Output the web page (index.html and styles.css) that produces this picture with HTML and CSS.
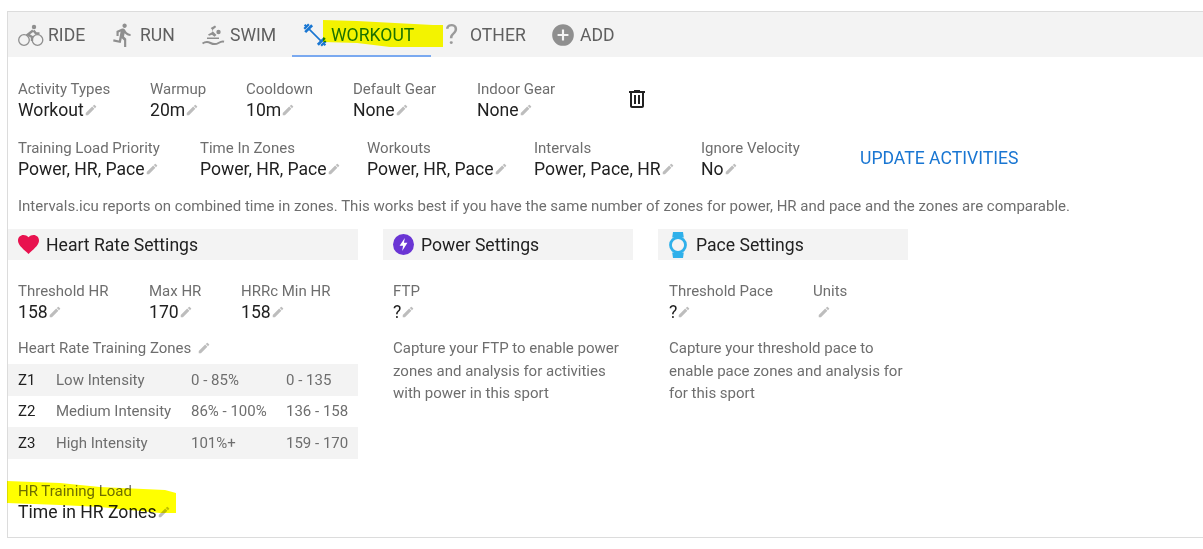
FILE: index.html
```html
<!DOCTYPE html>
<html lang="en">
<head>
<meta charset="utf-8">
<title>Sport settings</title>
<link rel="stylesheet" href="styles.css">
</head>
<body>
<svg class="defs" width="0" height="0" aria-hidden="true">
  <symbol id="pencil" viewBox="0 0 24 24"><path d="M3 17.25V21h3.75L17.81 9.94l-3.75-3.75L3 17.25zM20.71 7.04a1 1 0 0 0 0-1.41l-2.34-2.34a1 1 0 0 0-1.41 0l-1.83 1.83 3.75 3.75 1.83-1.83z"/></symbol>
</svg>
<main class="card">
  <nav class="tabs">
    <a class="tab"><svg class="ticon" viewBox="0 0 26 26"><circle cx="16" cy="5" r="2.200"/><g fill="none" stroke="#8f8f8f"><circle cx="6" cy="18" r="5.300" stroke-width="1.300"/><circle cx="19.500" cy="18" r="5.300" stroke-width="1.300"/><path d="M15 8.500L9.800 12.500 14 15v4M15.500 8.500l2.500 3h3.500" stroke-width="2.400"/></g></svg>RIDE</a>
    <a class="tab"><svg class="ticon" viewBox="0 0 24 24"><path d="M13.490 5.480c1.100 0 2-.9 2-2s-.9-2-2-2-2 .9-2 2 .9 2 2 2zm-3.600 13.900l1-4.400 2.100 2v6h2v-7.500l-2.100-2 .6-3c1.300 1.500 3.300 2.500 5.500 2.500v-2c-1.900 0-3.500-1-4.300-2.400l-1-1.600c-.4-.6-1-1-1.700-1-.3 0-.5.100-.8.100l-5.200 2.200v4.700h2v-3.400l1.800-.7-1.600 8.100-4.900-1-.4 2 7 1.400z"/></svg>RUN</a>
    <a class="tab tab-swim"><svg class="ticon" viewBox="0 0 26 26"><circle cx="16.500" cy="10" r="2.200"/><path d="M13 3.500l1.200 1.500-4.200 3.500 4.500 4.500-2 1.800-2.500-2-3 1-1-1.300 4-2.200 1-1.500-2.300-2.800z"/><path d="M5 15.500h12v1.500H5z"/><path fill="none" stroke="#8f8f8f" stroke-width="2" d="M0.500 21.500c3-2 5-2 8-.5s5.500 1.500 8 0 4-1.800 5.500-1.300"/></svg>SWIM</a>
    <a class="tab tab-active"><svg class="ticon" viewBox="0 0 24 24"><g transform="rotate(45 12 12)"><rect x="4" y="11.250" width="16" height="1.500"/><rect x="2.500" y="7.500" width="2.500" height="9"/><rect x="0" y="9" width="2" height="6"/><rect x="-1.500" y="11" width="2" height="2"/><rect x="19" y="7.500" width="2.500" height="9"/><rect x="22" y="9" width="2" height="6"/><rect x="23.500" y="11" width="2" height="2"/></g></svg>WORKOUT</a>
    <a class="tab tab-other"><span class="qmark">?</span>OTHER</a>
    <a class="tab tab-add"><svg class="ticon" viewBox="0 0 24 24"><path d="M12 2a10 10 0 1 0 0 20 10 10 0 0 0 0-20zm5 11h-4v4h-2v-4H7v-2h4V7h2v4h4v2z"/></svg>ADD</a>
  </nav>

  <div class="body">
    <div class="fields fields-top">
      <div class="field w-132"><span class="label">Activity Types</span><span class="value">Workout<svg class="pen"><use href="#pencil"/></svg></span></div>
      <div class="field w-96"><span class="label">Warmup</span><span class="value">20m<svg class="pen"><use href="#pencil"/></svg></span></div>
      <div class="field w-107"><span class="label">Cooldown</span><span class="value">10m<svg class="pen"><use href="#pencil"/></svg></span></div>
      <div class="field w-124"><span class="label">Default Gear</span><span class="value">None<svg class="pen"><use href="#pencil"/></svg></span></div>
      <div class="field w-148"><span class="label">Indoor Gear</span><span class="value">None<svg class="pen"><use href="#pencil"/></svg></span></div>
      <svg class="trash" viewBox="0 0 24 24"><path d="M15 4V3H9v1H4v2h1v13c0 1.100.9 2 2 2h10c1.100 0 2-.9 2-2V6h1V4h-5zm2 15H7V6h10v13zM9 8h2v9H9V8zm4 0h2v9h-2V8z"/></svg>
    </div>

    <div class="fields fields-second">
      <div class="field w-182"><span class="label">Training Load Priority</span><span class="value">Power, HR, Pace<svg class="pen"><use href="#pencil"/></svg></span></div>
      <div class="field w-167"><span class="label">Time In Zones</span><span class="value">Power, HR, Pace<svg class="pen"><use href="#pencil"/></svg></span></div>
      <div class="field w-167"><span class="label">Workouts</span><span class="value">Power, HR, Pace<svg class="pen"><use href="#pencil"/></svg></span></div>
      <div class="field w-167"><span class="label">Intervals</span><span class="value">Power, Pace, HR<svg class="pen"><use href="#pencil"/></svg></span></div>
      <div class="field w-159"><span class="label">Ignore Velocity</span><span class="value">No<svg class="pen"><use href="#pencil"/></svg></span></div>
      <a class="update">UPDATE ACTIVITIES</a>
    </div>

    <p class="note">Intervals.icu reports on combined time in zones. This works best if you have the same number of zones for power, HR and pace and the zones are comparable.</p>

    <div class="columns">
      <section class="panel panel-hr">
        <h2 class="panel-head"><svg class="heart" viewBox="1.500 2.500 21 19"><path d="M12 21.400l-1.500-1.400C5 15 1.500 11.800 1.500 7.900 1.500 4.800 3.900 2.500 7 2.500c1.800 0 3.600.8 5 2.200 1.400-1.400 3.200-2.200 5-2.200 3.100 0 5.500 2.300 5.500 5.400 0 3.900-3.500 7.100-9 12.100z"/></svg>Heart Rate Settings</h2>
        <div class="panel-body">
          <div class="fields">
            <div class="field w-131"><span class="label">Threshold HR</span><span class="value">158<svg class="pen"><use href="#pencil"/></svg></span></div>
            <div class="field w-92"><span class="label">Max HR</span><span class="value">170<svg class="pen"><use href="#pencil"/></svg></span></div>
            <div class="field"><span class="label">HRRc Min HR</span><span class="value">158<svg class="pen"><use href="#pencil"/></svg></span></div>
          </div>
          <div class="zones-title label">Heart Rate Training Zones <svg class="pen pen-title"><use href="#pencil"/></svg></div>
        </div>
        <div class="zone zone-shade"><b>Z1</b><span>Low Intensity</span><span>0 - 85%</span><span>0 - 135</span></div>
        <div class="zone"><b>Z2</b><span>Medium Intensity</span><span>86% - 100%</span><span>136 - 158</span></div>
        <div class="zone zone-shade"><b>Z3</b><span>High Intensity</span><span>101%+</span><span>159 - 170</span></div>
        <div class="field load"><span class="label">HR Training Load</span><span class="value">Time in HR Zones<svg class="pen"><use href="#pencil"/></svg></span></div>
      </section>

      <section class="panel panel-power">
        <h2 class="panel-head"><svg class="bolt" viewBox="0 0 24 24"><circle cx="12" cy="12" r="12" fill="#6a35d4"/><path fill="#fff" d="M13.500 4.500L7.500 13.500h4L10.500 19.500l6-9.500h-4z"/></svg>Power Settings</h2>
        <div class="panel-body">
          <div class="fields">
            <div class="field"><span class="label">FTP</span><span class="value">?<svg class="pen"><use href="#pencil"/></svg></span></div>
          </div>
          <p class="hint">Capture your FTP to enable power zones and analysis for activities with power in this sport</p>
        </div>
      </section>

      <section class="panel panel-pace">
        <h2 class="panel-head"><svg class="watch" viewBox="0 0 18 26"><path fill="#2fb0ea" d="M4 0h10l.8 5.500H3.200zM4 26h10l.8-5.500H3.200z"/><circle cx="9" cy="13" r="7.500" fill="none" stroke="#2fb0ea" stroke-width="2.800"/></svg>Pace Settings</h2>
        <div class="panel-body">
          <div class="fields">
            <div class="field w-144"><span class="label">Threshold Pace</span><span class="value">?<svg class="pen"><use href="#pencil"/></svg></span></div>
            <div class="field"><span class="label">Units</span><span class="value value-empty"><svg class="pen"><use href="#pencil"/></svg></span></div>
          </div>
          <p class="hint">Capture your threshold pace to enable pace zones and analysis for for this sport</p>
        </div>
      </section>
    </div>
  </div>
  <svg class="marker marker-tab" viewBox="0 0 120 27" preserveAspectRatio="none"><path d="M0 0L34 1 110 5H120V27H67L34 23 0 22z"/></svg>
  <svg class="marker marker-load" viewBox="0 0 169 32" preserveAspectRatio="none"><path d="M0 0L53 2 93 6 158 9 169 12V32H153L93 26 53 24 0 22z"/></svg>
</main>
</body>
</html>
```

FILE: styles.css
```css
* { box-sizing: border-box; }
html, body { margin: 0; padding: 0; background: #fff; }
body {
  padding: 11px 0 0 7px;
  height: 549px;
  overflow: hidden;
  font-family: Roboto, "Liberation Sans", sans-serif;
  color: #212121;
}
.defs { position: absolute; }
.card {
  position: relative;
  height: 527px;
  border: 1px solid #dcdcdc;
  border-right: 0;
}
.tabs {
  display: flex;
  height: 45px;
  background: #f3f3f3;
}
.tab {
  display: flex;
  align-items: center;
  padding: 0 11px 0 10px;
  font-size: 17.600px;
  color: #5f5f5f;
  height: 45px;
}
.tab:nth-child(1) { width: 92px; }
.tab:nth-child(2) { width: 92px; }
.tab:nth-child(3) { width: 100px; }
.tab-swim .ticon { margin-right: 2px; }
.tab-active {
  width: 139px;
  color: #1b72c6;
  border-bottom: 2px solid #7aa9f0;
  padding-top: 2px;
}
.tab-active .ticon { fill: #1976d2; margin-right: 3px; }
.tab-other { width: 108px; padding-left: 14px; }
.tab-add { padding-left: 11px; }
.ticon {
  width: 26px;
  height: 26px;
  fill: #8f8f8f;
  margin-right: 4px;
  flex: none;
}
.qmark {
  font-size: 28px;
  color: #9a9a9a;
  width: 25px;
  flex: none;
}
.fields { display: flex; }
.fields-top { padding: 24px 10px 0; height: 83px; }
.fields-second { padding: 0 10px; height: 57px; }
.field { display: flex; flex-direction: column; flex: none; }
.w-132 { width: 132px; }
.w-96 { width: 96px; }
.w-107 { width: 107px; }
.w-124 { width: 124px; }
.w-148 { width: 148px; }
.w-182 { width: 182px; }
.w-167 { width: 167px; }
.w-159 { width: 159px; }
.w-131 { width: 131px; }
.w-92 { width: 92px; }
.w-144 { width: 144px; }
.label {
  font-size: 15px;
  line-height: 17px;
  color: #6e6e6e;
}
.value {
  display: flex;
  align-items: center;
  font-size: 17.600px;
  line-height: 24px;
  color: #212121;
}
.value-empty { min-height: 24px; padding-left: 4px; }
.pen {
  width: 14px;
  height: 14px;
  fill: #bdbdbd;
  flex: none;
}
.pen-title { display: inline-block; vertical-align: -2px; margin-left: 2px; }
.trash {
  width: 24px;
  height: 24px;
  fill: #222;
  margin-top: 6px;
  flex: none;
}
.update {
  font-size: 17.600px;
  color: #1976d2;
  align-self: flex-start;
  margin-top: 8px;
}
.note {
  margin: 0;
  padding: 0 10px;
  height: 32px;
  font-size: 15px;
  line-height: 18px;
  color: #6e6e6e;
}
.columns { display: flex; }
.panel { flex: none; }
.panel-hr { width: 350px; margin-right: 25px; }
.panel-power { width: 250px; margin-right: 25px; }
.panel-pace { width: 250px; }
.panel-pace .panel-body { padding: 23px 0 0 11px; }
.panel-head {
  display: flex;
  align-items: center;
  margin: 0;
  height: 31px;
  padding-left: 10px;
  background: #f3f3f3;
  font-size: 17.600px;
  font-weight: 400;
  color: #212121;
}
.heart { width: 21px; height: 19px; fill: #e8124f; margin-right: 7px; }
.bolt { width: 21px; height: 21px; margin-right: 7px; }
.watch { width: 18px; height: 26px; margin-right: 9px; margin-left: 1px; }
.panel-body { padding: 23px 10px 0; }
.zones-title { margin-top: 16px; height: 24px; }
.zone {
  display: grid;
  grid-template-columns: 38px 135px 95px 1fr;
  align-items: center;
  height: 31.500px;
  padding-left: 10px;
  font-size: 15px;
  color: #6e6e6e;
}
.zone b { font-weight: 400; color: #212121; }
.zone-shade { background: #f3f3f3; }
.load { padding: 24px 0 0 10px; }
.hint {
  margin: 13px 0 0;
  font-size: 15px;
  line-height: 22.500px;
  color: #6e6e6e;
}
.marker {
  position: absolute;
  fill: #ffff00;
  mix-blend-mode: multiply;
  pointer-events: none;
}
.marker-tab { left: 315px; top: 8px; width: 120px; height: 27px; }
.marker-load { left: -1px; top: 469px; width: 169px; height: 32px; }
```
